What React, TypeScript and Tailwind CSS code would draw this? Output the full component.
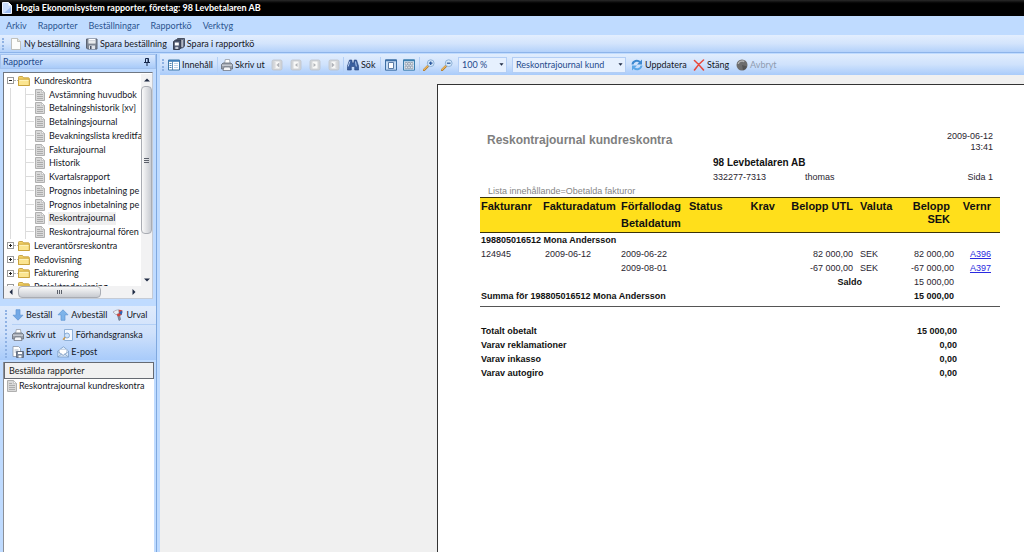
import React from "react";

type IconProps = { className?: string };
const base = "w-3 h-3 shrink-0";

const PageIcon = () => (
  <svg viewBox="0 0 12 12" className={base}>
    <path d="M1.500 .5h6l3 3v8h-9z" fill="#fdfdfb" stroke="#b4b4ac" strokeWidth=".8" />
    <path d="M7.500 .5v3h3" fill="#e6e6dc" stroke="#b4b4ac" strokeWidth=".8" />
  </svg>
);
const AppIcon = () => (
  <svg viewBox="0 0 10 12" className="w-[10px] h-3 shrink-0">
    <path d="M.5 .5h6l3 3v8h-9z" fill="#c9dcfb" stroke="#eef4ff" />
    <path d="M6.500 .5v3h3z" fill="#fff" />
    <path d="M2 11l7-6v6z" fill="#9dbdf2" />
  </svg>
);
const DocIcon = () => (
  <svg viewBox="0 0 12 12" className={base}>
    <path d="M1.500 .5h6l3 3v8h-9z" fill="#d9d9d9" stroke="#b0b0b0" />
    <path d="M7.500 .5v3h3z" fill="#f4f4f4" stroke="#b0b0b0" strokeWidth=".6" />
    <path d="M3 3.500h3M3 5.500h6M3 7.500h6M3 9.500h6" stroke="#a2a2a2" strokeWidth=".8" />
  </svg>
);
const FolderIcon = () => (
  <svg viewBox="0 0 12 12" className={base}>
    <path d="M.5 2.500q0-1 1-1h3l1 1.300h5q.8 0 .8 .8v6.900h-10.800z" fill="#f3d268" stroke="#bd942f" strokeWidth=".8" />
    <path d="M.5 10.500v-5.500l1-.8h9l.8 .8v5.500z" fill="#fbe590" stroke="#c39a30" strokeWidth=".8" />
    <path d="M1.300 5.400h9.200" stroke="#fff6c8" strokeWidth=".8" />
  </svg>
);
const DiskIcon = () => (
  <svg viewBox="0 0 12 12" className={base}>
    <path d="M.5 1h10.500v10h-9.500l-1-1z" fill="#7f8794" stroke="#5b6372" />
    <path d="M2.500 1h7v4.500h-7z" fill="#fff" />
    <path d="M3 2.500h6M3 4h6" stroke="#b6bcc8" strokeWidth=".6" />
    <path d="M3 7.500h6v3.500h-6z" fill="#dfe3ea" />
    <path d="M4 8h1.500v3h-1.500z" fill="#4b5364" />
  </svg>
);
const DisksIcon = () => (
  <svg viewBox="0 0 12 12" className={base}>
    <path d="M4.500 .5h7v7.500l-2 2h-5z" fill="#76819a" stroke="#303747" strokeWidth=".8" />
    <path d="M3.500 1.500h6.500v8h-6.500z" fill="#e6ebf3" stroke="#4b556c" strokeWidth=".7" />
    <path d="M.5 3.500l2-1.500h5.500v7.500l-1.500 2h-6z" fill="#4a546c" stroke="#252b3a" strokeWidth=".8" />
    <path d="M1.800 4.500h4v3h-4z" fill="#fff" />
    <path d="M2.300 8.800h3v2.200h-3z" fill="#c6ccd8" />
  </svg>
);
const PinIcon = () => (
  <svg viewBox="0 0 8 8" className="w-2 h-2">
    <path d="M2.500 .5h3v4h-3zM1 4.500h6M4 4.500v3.500" fill="none" stroke="#17284c" />
    <path d="M4.500 .5h1v4h-1z" fill="#17284c" />
  </svg>
);
const ContentsIcon = () => (
  <svg viewBox="0 0 12 12" className={base}>
    <path d="M.5 1h11v10h-11z" fill="#fff" stroke="#3f78a8" />
    <path d="M.5 1h11v1.800h-11z" fill="#3f7fb8" />
    <path d="M4.500 2.500v8.500" stroke="#3f78a8" strokeWidth=".8" />
    <path d="M1.500 4.500h2M1.500 6.500h2M1.500 8.500h2" stroke="#3f78a8" strokeWidth=".9" />
    <path d="M6 4.500h4M6 6.500h4M6 8.500h4" stroke="#b4cfe6" strokeWidth=".9" />
  </svg>
);
const PrinterIcon = () => (
  <svg viewBox="0 0 12 12" className={base}>
    <path d="M3.500 5l.8-4.500h4.200l.6 4.500z" fill="#fff" stroke="#8b919b" strokeWidth=".7" />
    <path d="M.5 5.500l1.500-1.500h8l1.500 1.500v4.500h-11z" fill="#989ea8" stroke="#666c77" strokeWidth=".8" />
    <path d="M1 6.200h10" stroke="#d9dce2" />
    <path d="M3 8h6l1 3.500h-8z" fill="#f5f6f8" stroke="#666c77" strokeWidth=".7" />
  </svg>
);
const NavIcon = ({ kind }: { kind: number }) => (
  <svg viewBox="0 0 12 12" className={base}>
    <rect x="1" y="1" width="10" height="10" rx="1.500" fill="#d2d5d8" stroke="#bcc2ca" strokeWidth=".8" />
    <rect x="3.500" y="2.500" width="5" height="7" fill="#f8f8f7" />
    {kind === 0 && <path d="M4 3v6M8 4v4l-2.300-2z" fill="#b0b3b8" stroke="#b0b3b8" strokeWidth=".5" />}
    {kind === 1 && <path d="M7.500 4v4l-2.500-2z" fill="#b0b3b8" />}
    {kind === 2 && <path d="M4.500 4v4l2.500-2z" fill="#b0b3b8" />}
    {kind === 3 && <path d="M8 3v6M4 4v4l2.300-2z" fill="#b0b3b8" stroke="#b0b3b8" strokeWidth=".5" />}
  </svg>
);
const BinocularsIcon = () => (
  <svg viewBox="0 0 12 12" className={base}>
    <path d="M2.500 1h2.300l.5 3h1.400l.5-3h2.300l2.200 6.500v3.500h-4v-3.500h-3.400v3.500h-4v-3.500z" fill="#3a5f9e" stroke="#27427a" strokeWidth=".6" />
    <path d="M2.800 2.500l-1.600 5M8.500 2.500l.8 5" stroke="#b4ccf0" />
  </svg>
);
const OnePageIcon = () => (
  <svg viewBox="0 0 12 12" className={base}>
    <path d="M.5 .8h11v10.400h-11z" fill="#c3daf3" stroke="#3d6fa5" />
    <path d="M.5 1.500h11" stroke="#3d6fa5" strokeWidth="1.500" />
    <path d="M3.500 3.500h5v6h-5z" fill="#fff" stroke="#4c6f9c" strokeWidth=".9" />
  </svg>
);
const ManyPagesIcon = () => (
  <svg viewBox="0 0 12 12" className={base}>
    <path d="M.5 .8h11v10.400h-11z" fill="#d8e6f5" stroke="#3d7faf" />
    <path d="M.5 1.500h11" stroke="#3d7faf" strokeWidth="1.500" />
    <path d="M2.200 3.500h2v2.500h-2zM5 3.500h2v2.500h-2zM7.800 3.500h2v2.500h-2zM2.200 7.200h2v2.500h-2zM5 7.200h2v2.500h-2zM7.800 7.200h2v2.500h-2z" fill="#fff" stroke="#7e8c9d" strokeWidth=".7" />
  </svg>
);
const ZoomIcon = ({ plus }: { plus?: boolean }) => (
  <svg viewBox="0 0 12 12" className={base}>
    <path d="M1 11l4-4" stroke="#b4792a" strokeWidth="2.400" strokeLinecap="round" />
    <path d="M1 10.700l3.500-3.500" stroke="#f0bd62" strokeWidth="1.100" strokeLinecap="round" />
    <circle cx="7.700" cy="4.200" r="3.400" fill="#d5e9fb" stroke="#8fb2d8" />
    <path d={plus ? "M5.900 4.200h3.600M7.700 2.400v3.600" : "M5.900 4.200h3.600"} stroke="#27549a" strokeWidth="1.200" />
  </svg>
);
const RefreshIcon = () => (
  <svg viewBox="0 0 12 12" className={base}>
    <path d="M1.500 5.500a4.300 4.300 0 0 1 7.500-2.300" fill="none" stroke="#3c88d0" strokeWidth="2" />
    <path d="M11 .5v5h-5z" fill="#3c88d0" />
    <path d="M10.500 6.500a4.300 4.300 0 0 1-7.500 2.300" fill="none" stroke="#5aa6e6" strokeWidth="2" />
    <path d="M1 11.500v-5h5z" fill="#5aa6e6" />
  </svg>
);
const CloseIcon = () => (
  <svg viewBox="0 0 12 12" className={base}>
    <path d="M1.500 1.500q4 3.500 9 9.500M10.500 1q-5 4-9 10" fill="none" stroke="#e8473b" strokeWidth="1.600" strokeLinecap="round" />
  </svg>
);
const StopIcon = () => (
  <svg viewBox="0 0 12 12" className={base}>
    <circle cx="6" cy="6" r="5.500" fill="#6d6d6d" />
    <path d="M2.300 5a4 3.200 0 0 1 6-2.500" fill="none" stroke="#b5b5b5" strokeWidth="1.400" />
    <path d="M6 6l5 1.500a5.200 5.200 0 0 1-4 3.800z" fill="#555" />
  </svg>
);
const ArrowIcon = ({ up }: { up?: boolean }) => (
  <svg viewBox="0 0 12 12" className={base}>
    <path
      d={up ? "M6 .8l5 5h-3v5.500h-4v-5.500h-3z" : "M6 11.200l5-5h-3v-5.500h-4v5.500h-3z"}
      fill={up ? "#7db4ea" : "#73a9e6"}
      stroke="#5f95d3"
      strokeWidth=".7"
    />
  </svg>
);
const FilterIcon = () => (
  <svg viewBox="0 0 12 12" className={base}>
    <path d="M5.500 6l1.500 5.500 1.500-1-1-5z" fill="#8b98ab" stroke="#566277" strokeWidth=".6" />
    <path d="M1 3q5-3.500 9.500-1.500l-1 4.500-3 1.500z" fill="#d64338" />
    <path d="M1 3q3-2.300 5.500-2.300l.5 3.300-3 1.800z" fill="#e9edf3" stroke="#8b98ab" strokeWidth=".5" />
    <path d="M7 4l2.500-2.500 1 1.500-1 3z" fill="#2f65b5" />
  </svg>
);
const PreviewIcon = () => (
  <svg viewBox="0 0 12 12" className={base}>
    <path d="M2.500 .5h8v11h-8z" fill="#f4f9ff" stroke="#8fb0d8" />
    <circle cx="5" cy="6.500" r="2.500" fill="#cfe4fa" stroke="#7fa4d0" strokeWidth=".9" />
    <path d="M3.200 8.300l-2.200 2.400" stroke="#d09c48" strokeWidth="1.400" />
  </svg>
);
const ExportIcon = () => (
  <svg viewBox="0 0 12 12" className={base}>
    <path d="M1 .5h5.500l2 2v8h-7.500z" fill="#fff" stroke="#8b95a4" strokeWidth=".8" />
    <path d="M2.500 4h4M2.500 6h3" stroke="#98a7ba" strokeWidth=".8" />
    <path d="M4.500 5.500h7v6h-7z" fill="#7a8698" stroke="#556073" strokeWidth=".8" />
    <path d="M6 6h4v2h-4zM6.500 9.500h3v2h-3z" fill="#fff" />
  </svg>
);
const MailIcon = () => (
  <svg viewBox="0 0 12 12" className={base}>
    <path d="M.8 5l5.700-4.300 5 4.300v6h-10.700z" fill="#dcebfb" stroke="#7c9dc6" strokeWidth=".8" />
    <path d="M2.500 3.500h7v4.500l-3.500 1.500-3.500-1.500z" fill="#fff" stroke="#a8b9ce" strokeWidth=".5" />
    <path d="M.8 5.500l5.400 3.800 5.300-3.800M.8 11l4-3M11.500 11l-4-3" fill="none" stroke="#7c9dc6" strokeWidth=".8" />
  </svg>
);

const Caret = ({ d, className }: IconProps & { d: string }) => (
  <svg viewBox="0 0 6 6" className={className ?? "w-[6px] h-[6px]"}>
    <path d={d} fill="#1f2b44" />
  </svg>
);
const Grip = ({ className = "h-3" }: IconProps) => (
  <span className={`${className} w-0 shrink-0 border-l-2 border-dotted border-[#8fb2e4]`} />
);
const Separator = () => <span className="h-4 w-px shrink-0 bg-[#b4d0f6]" />;

function ToolButton({ icon, children, className = "", disabled = false, label }: {
  icon: React.ReactNode; children?: React.ReactNode; className?: string; disabled?: boolean; label?: string;
}) {
  return (
    <button
      type="button"
      aria-label={label}
      disabled={disabled}
      className={`flex shrink-0 items-center gap-[2px] whitespace-nowrap text-left disabled:text-[#8f9cb0] ${className}`}
    >
      {icon}
      {children}
    </button>
  );
}

const reports = [
  "Avstämning huvudbok",
  "Betalningshistorik [xv]",
  "Betalningsjournal",
  "Bevakningslista kreditfa",
  "Fakturajournal",
  "Historik",
  "Kvartalsrapport",
  "Prognos inbetalning pe",
  "Prognos inbetalning pe",
  "Reskontrajournal",
  "Reskontrajournal fören",
];
const folders = ["Leverantörsreskontra", "Redovisning", "Fakturering", "Projektredovisning"];

function FolderRow({ name, open }: { name: string; open?: boolean }) {
  return (
    <li className="flex items-center">
      <button type="button" aria-label={name} className="ml-[3px] flex h-[7px] w-[7px] items-center justify-center border border-[#9a9a9a] bg-white">
        <svg viewBox="0 0 5 5" className="h-[5px] w-[5px]">
          <path d={open ? "M1 2.500h3" : "M1 2.500h3M2.500 1v3"} stroke="#222" />
        </svg>
      </button>
      <span className="w-1 border-t border-dotted border-[#b5b5b5]" />
      <FolderIcon />
      <span className="ml-1 whitespace-nowrap">{name}</span>
    </li>
  );
}

function Tree() {
  return (
    <div className="mx-[3px] mt-[3px] border border-[#c5cbd5] border-l-[#6f7783] border-t-[#6f7783] bg-white pt-px">
      <div className="flex h-[212px]">
        <div className="min-w-0 flex-1 overflow-hidden">
          <ul className="grid h-[220px] auto-rows-fr">
            <FolderRow name="Kundreskontra" open />
            {reports.map((name, index) => (
              <li key={index} className="ml-[6px] flex items-stretch border-l border-[#dcdcdc]">
                <span className="ml-[14px] w-[9px] shrink-0 border-l border-[#dcdcdc]">
                  <span className="block h-1/2 border-b border-[#dcdcdc]" />
                </span>
                <span className="flex items-center"><DocIcon /></span>
                <button
                  type="button"
                  className={`ml-[2px] whitespace-nowrap px-px text-left ${name === "Reskontrajournal" ? "bg-[#efefef]" : ""}`}
                >
                  {name}
                </button>
              </li>
            ))}
            {folders.map((name) => <FolderRow key={name} name={name} />)}
          </ul>
        </div>
        <div className="flex w-[11px] flex-col items-center bg-[#f2f2f3]">
          <span className="flex h-3 items-center"><Caret d="M0 4.500l3-3 3 3z" /></span>
          <span className="flex h-[148px] w-full flex-col items-center justify-center gap-px rounded-sm border border-[#a9acb3] bg-linear-to-r from-[#fafafa] to-[#c8cbd1]">
            <i className="h-px w-[5px] bg-[#5b606a]" />
            <i className="h-px w-[5px] bg-[#5b606a]" />
            <i className="h-px w-[5px] bg-[#5b606a]" />
          </span>
          <span className="mt-auto flex h-3 items-center"><Caret d="M0 1.500l3 3 3-3z" /></span>
        </div>
      </div>
      <div className="flex h-3 items-center bg-[#f2f2f3] pr-[11px]">
        <span className="flex w-[14px] justify-center"><Caret d="M4.500 0l-3 3 3 3z" /></span>
        <span className="flex h-full w-[83px] items-center justify-center gap-px rounded-sm border border-[#a9acb3] bg-linear-to-b from-[#fafafa] to-[#c8cbd1]">
          <i className="h-[4px] w-px bg-[#5b606a]" />
          <i className="h-[4px] w-px bg-[#5b606a]" />
          <i className="h-[4px] w-px bg-[#5b606a]" />
        </span>
        <span className="ml-auto flex w-[14px] justify-center"><Caret d="M1.500 0l3 3-3 3z" /></span>
      </div>
    </div>
  );
}

function Sidebar() {
  return (
    <aside className="flex w-[157px] shrink-0 flex-col border-r border-[#7fa8de] bg-[#bfdbff]">
      <h2 className="flex h-[15px] items-center justify-between border border-[#a4c3ef] bg-linear-to-b from-[#dbe9fd] to-[#a9cbf9] px-[2px] pr-1 text-[#1f4a8c]">
        Rapporter
        <button type="button" aria-label="Fäst"><PinIcon /></button>
      </h2>
      <Tree />
      <div className="mt-[7px] flex gap-[5px] bg-linear-to-b from-[#dfebfc] via-[#cfe1fb] to-[#a8cbfa] pl-[5px]">
        <Grip className="mt-1 h-[48px]" />
        <div className="min-w-0 flex-1">
          <div className="flex h-[19px] items-center gap-[5px] border-b border-[#b4d0f6]">
            <ToolButton icon={<ArrowIcon />}>Beställ</ToolButton>
            <ToolButton icon={<ArrowIcon up />}>Avbeställ</ToolButton>
            <ToolButton icon={<FilterIcon />}>Urval</ToolButton>
          </div>
          <div className="flex h-[19px] items-center gap-[6px]">
            <ToolButton icon={<PrinterIcon />}>Skriv ut</ToolButton>
            <ToolButton icon={<PreviewIcon />}>Förhandsgranska</ToolButton>
          </div>
          <div className="flex h-4 items-center gap-[5px]">
            <ToolButton icon={<ExportIcon />}>Export</ToolButton>
            <ToolButton icon={<MailIcon />}>E-post</ToolButton>
          </div>
        </div>
      </div>
      <section className="ml-[3px] mr-[2px] mt-[2px] flex-1 border-l border-[#8b8f96] bg-white">
        <h2 className="flex h-[17px] items-center border border-[#666a72] bg-[#f1f1f1] pl-1 text-[#222]">Beställda rapporter</h2>
        <button type="button" className="mt-px flex items-center gap-px whitespace-nowrap pl-[2px]">
          <DocIcon />
          Reskontrajournal kundreskontra
        </button>
      </section>
    </aside>
  );
}

function Dropdown({ label, value, className }: { label: string; value: string; className: string }) {
  return (
    <span className={`relative flex h-4 shrink-0 items-center ${className}`}>
      <select aria-label={label} defaultValue={value} className="h-full w-full appearance-none border border-[#b3cef5] bg-[#e6f0fe] pl-[3px] text-[#1f4a8c]">
        <option>{value}</option>
      </select>
      <Caret d="M.5 1.500l2.500 3 2.500-3z" className="pointer-events-none absolute right-[3px] h-[5px] w-[5px]" />
    </span>
  );
}

function ReportToolbar() {
  return (
    <div className="flex h-[21px] items-center bg-linear-to-b from-[#e1edfd] via-[#cfe2fc] to-[#a9cbfa] pl-[2px]">
      <Grip />
      <ToolButton icon={<ContentsIcon />} className="ml-1 w-[49px]">Innehåll</ToolButton>
      <Separator />
      <ToolButton icon={<PrinterIcon />} className="ml-[3px] w-[50px]">Skriv ut</ToolButton>
      <ToolButton icon={<NavIcon kind={0} />} className="w-[19px]" label="Första sidan" disabled />
      <ToolButton icon={<NavIcon kind={1} />} className="w-[19px]" label="Föregående sida" disabled />
      <ToolButton icon={<NavIcon kind={2} />} className="w-[19px]" label="Nästa sida" disabled />
      <ToolButton icon={<NavIcon kind={3} />} className="w-[15px]" label="Sista sidan" disabled />
      <Separator />
      <ToolButton icon={<BinocularsIcon />} className="ml-[3px] w-[33px]">Sök</ToolButton>
      <Separator />
      <ToolButton icon={<OnePageIcon />} className="ml-1 w-[18px]" label="En sida" />
      <ToolButton icon={<ManyPagesIcon />} className="w-4" label="Flera sidor" />
      <Separator />
      <ToolButton icon={<ZoomIcon plus />} className="ml-[3px] w-[18px]" label="Zooma in" />
      <ToolButton icon={<ZoomIcon />} className="w-[17px]" label="Zooma ut" />
      <Dropdown label="Zoom" value="100 %" className="w-[49px]" />
      <Dropdown label="Rapport" value="Reskontrajournal kund" className="ml-[5px] w-[114px]" />
      <ToolButton icon={<RefreshIcon />} className="ml-[5px] w-[62px]">Uppdatera</ToolButton>
      <ToolButton icon={<CloseIcon />} className="w-[43px]">Stäng</ToolButton>
      <ToolButton icon={<StopIcon />} disabled>Avbryt</ToolButton>
    </div>
  );
}

const totals = [
  ["Totalt obetalt", "15 000,00"],
  ["Varav reklamationer", "0,00"],
  ["Varav inkasso", "0,00"],
  ["Varav autogiro", "0,00"],
];

const invoiceRows = [
  { nr: "124945", date: "2009-06-12", due: "2009-06-22", amount: "82 000,00", voucher: "A396" },
  { nr: "", date: "", due: "2009-08-01", amount: "-67 000,00", voucher: "A397" },
];

function Report() {
  return (
    <article className="ml-[277px] mt-[9px] flex-1 border-l border-t border-[#333] bg-white pl-[42px] pr-6 pt-[46px] font-['Liberation_Sans',sans-serif] text-[9px] text-[#2a2530]">
      <header>
        <div className="flex items-start justify-between pr-[7px]">
          <h1 className="ml-[7px] mt-[2px] text-[12px] font-bold leading-[14px] text-[#7f7f7f]">Reskontrajournal kundreskontra</h1>
          <p className="text-right leading-[11px]">2009-06-12<br />13:41</p>
        </div>
        <p className="ml-[233px] mt-1 text-[10px] font-bold leading-3 text-[#111]">98 Levbetalaren AB</p>
        <div className="ml-[233px] mt-[2px] flex pr-[7px] leading-3">
          <span className="w-[92px]">332277-7313</span>
          <span>thomas</span>
          <span className="ml-auto">Sida 1</span>
        </div>
        <p className="ml-[8px] mt-[2px] leading-3 text-[#858585]">Lista innehållande=Obetalda fakturor</p>
      </header>
      <table className="w-full table-fixed border-collapse whitespace-nowrap leading-[14px]">
        <colgroup>
          <col className="w-[62px]" /><col className="w-[78px]" /><col className="w-[68px]" />
          <col className="w-[42px]" /><col className="w-[46px]" /><col className="w-[78px]" />
          <col className="w-[44px]" /><col className="w-[58px]" /><col />
        </colgroup>
        <thead className="border-y border-[#3a3208] bg-[#ffdf1b] text-[11px] leading-[17px] text-[#111]">
          <tr className="text-left align-top">
            <th className="px-px">Fakturanr</th>
            <th className="px-px">Fakturadatum</th>
            <th className="px-px">Förfallodag<br />Betaldatum</th>
            <th className="px-px">Status</th>
            <th className="px-px text-right">Krav</th>
            <th className="px-px text-right">Belopp UTL</th>
            <th className="pl-[6px]">Valuta</th>
            <th className="pr-[6px] pt-[2px] text-right leading-[13px]">Belopp<br />SEK</th>
            <th className="pr-[9px] text-right">Vernr</th>
          </tr>
        </thead>
        <tbody>
          <tr className="text-left text-[#111]">
            <th colSpan={9} className="px-px">198805016512 Mona Andersson</th>
          </tr>
          {invoiceRows.map((row) => (
            <tr key={row.voucher}>
              <td className="px-px">{row.nr}</td>
              <td className="pl-[3px]">{row.date}</td>
              <td className="px-px">{row.due}</td>
              <td />
              <td />
              <td className="px-px text-right">{row.amount}</td>
              <td className="pl-[6px]">SEK</td>
              <td className="pr-[2px] text-right">{row.amount}</td>
              <td className="pr-[9px] text-right"><a href={`#${row.voucher}`} className="text-[#2a2ae0] underline">{row.voucher}</a></td>
            </tr>
          ))}
          <tr className="leading-[15px]">
            <th colSpan={7} className="pr-9 text-right text-[#111]">Saldo</th>
            <td className="pr-[2px] text-right">15 000,00</td>
            <td />
          </tr>
          <tr className="border-b border-[#555] text-left font-bold leading-3 text-[#111]">
            <th colSpan={7} className="px-px pb-1">Summa för 198805016512 Mona Andersson</th>
            <td className="pb-1 pr-[2px] text-right">15 000,00</td>
            <td />
          </tr>
        </tbody>
      </table>
      <table className="mt-[17px] w-full table-fixed border-collapse font-bold leading-[14px] text-[#111]">
        <tbody>
          {totals.map(([label, amount]) => (
            <tr key={label}>
              <th className="px-px text-left">{label}</th>
              <td className="pr-[43px] text-right">{amount}</td>
            </tr>
          ))}
        </tbody>
      </table>
    </article>
  );
}

export default function App() {
  return (
    <div className="flex min-h-screen flex-col overflow-hidden bg-[#bfdbff] font-[Lato,'Open_Sans',sans-serif] text-[9px] leading-3 text-[#15181f]">
      <header>
        <div className="flex h-4 items-center gap-1 bg-linear-to-b from-[#2a2a2a] to-black to-30% pl-[2px] text-white">
          <AppIcon />
          <h1 className="font-bold">Hogia Ekonomisystem rapporter, företag: 98 Levbetalaren AB</h1>
        </div>
        <nav className="flex h-[19px] items-center gap-[11px] bg-[#bfdbff] pl-[6px] text-[#2c5590]">
          {["Arkiv", "Rapporter", "Beställningar", "Rapportkö", "Verktyg"].map((item) => (
            <button type="button" key={item}>{item}</button>
          ))}
        </nav>
        <div className="flex h-[18px] items-center gap-[6px] border-b border-[#8db4ea] bg-linear-to-b from-[#e3eefe] via-[#d3e4fc] to-[#b3d1fa] pl-[2px]">
          <Grip />
          <ToolButton icon={<PageIcon />}>Ny beställning</ToolButton>
          <ToolButton icon={<DiskIcon />}>Spara beställning</ToolButton>
          <ToolButton icon={<DisksIcon />}>Spara i rapportkö</ToolButton>
        </div>
      </header>
      <div className="flex flex-1 gap-[3px] pt-px">
        <Sidebar />
        <main className="flex min-w-0 flex-1 flex-col bg-[#f0f0f0]">
          <ReportToolbar />
          <Report />
        </main>
      </div>
    </div>
  );
}
